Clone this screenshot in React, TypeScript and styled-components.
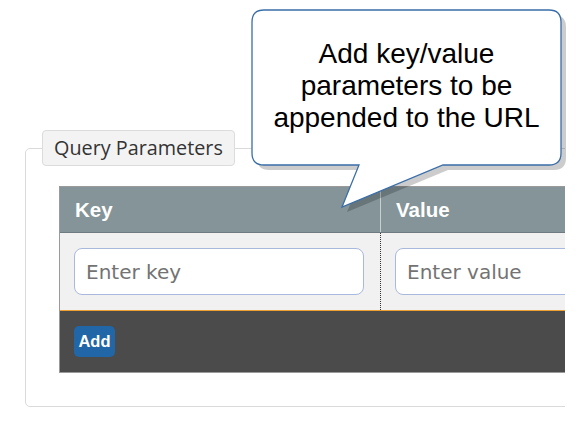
import styled, { createGlobalStyle } from "styled-components";

const GlobalStyle = createGlobalStyle`
  html, body {
    margin: 0;
    padding: 0;
    background: #ffffff;
  }
  * {
    box-sizing: border-box;
  }
`;

const Page = styled.div`
  position: relative;
  width: 577px;
  height: 430px;
  overflow: hidden;
  background: #ffffff;
`;

const Frame = styled.div`
  width: 565px;
  padding: 130px 0 0 25px;
  overflow: hidden;
`;

const ParamsFieldset = styled.fieldset`
  width: 620px;
  margin: 0;
  padding: 20px 0 33px 16px;
  border: 1px solid #dadada;
  border-radius: 5px;
`;

const ParamsLegend = styled.legend`
  padding: 0 11px;
  height: 36px;
  line-height: 33px;
  font-family: "Open Sans", "Liberation Sans", sans-serif;
  font-size: 19.8px;
  color: #333333;
  background: #f3f3f3;
  border: 1px solid #dcdcdc;
  border-radius: 4px;
`;

const Grid = styled.div`
  margin-left: 17px;
  width: 560px;
  border: 1px solid #9a9a9a;
  border-right: none;
`;

const Row = styled.div<{ $kind: "head" | "body" }>`
  display: grid;
  grid-template-columns: 320px 1fr;
  background: ${(p) => (p.$kind === "head" ? "#849498" : "#f1f1f1")};
  border-bottom: 1px solid ${(p) => (p.$kind === "head" ? "#6f7b7e" : "#f0a030")};
`;

const HeadCell = styled.div<{ $divider?: boolean }>`
  height: 45px;
  padding-left: 15px;
  display: flex;
  align-items: center;
  font-family: "Liberation Sans", Arial, sans-serif;
  font-weight: 700;
  font-size: 20.5px;
  color: #ffffff;
  border-left: ${(p) => (p.$divider ? "1px solid #c8cfd1" : "none")};
`;

const BodyCell = styled.div<{ $divider?: boolean }>`
  height: 77px;
  padding: 15px 16px 0 14px;
  border-left: ${(p) => (p.$divider ? "1px dotted #333333" : "none")};
`;

const TextField = styled.input`
  width: 100%;
  height: 47px;
  padding: 0 11px;
  border: 1px solid #a9b8dd;
  border-radius: 8px;
  background: #ffffff;
  font-family: "DejaVu Sans", Verdana, sans-serif;
  font-size: 20px;
  color: #333333;
  outline: none;
  &::placeholder {
    color: #737373;
  }
`;

const Footer = styled.div`
  height: 61px;
  padding: 15px 14px;
  background: #4b4b4b;
`;

const AddButton = styled.button`
  width: 41px;
  height: 31px;
  padding: 0;
  border: none;
  border-radius: 5px;
  background: #2166a6;
  color: #ffffff;
  font-family: "Liberation Sans", Arial, sans-serif;
  font-weight: 700;
  font-size: 16.5px;
`;

const Callout = styled.div`
  position: absolute;
  left: 250px;
  top: 8px;
  width: 322px;
  height: 210px;
`;

const CalloutShape = styled.svg`
  position: absolute;
  left: 0;
  top: 0;
`;

const CalloutText = styled.div`
  position: absolute;
  left: 2px;
  top: 30px;
  width: 309px;
  text-align: center;
  font-family: "Liberation Sans", Arial, sans-serif;
  font-size: 28px;
  line-height: 32px;
  color: #000000;
`;

const bubble =
  "M14,2 H299 Q311,2 311,14 V145 Q311,157 299,157 H193 L92,199 L109,157 H14 Q2,157 2,145 V14 Q2,2 14,2 Z";

export default function App() {
  return (
    <Page>
      <GlobalStyle />
      <Frame>
        <ParamsFieldset>
          <ParamsLegend>Query Parameters</ParamsLegend>
          <Grid>
            <Row $kind="head">
              <HeadCell>Key</HeadCell>
              <HeadCell $divider>Value</HeadCell>
            </Row>
            <Row $kind="body">
              <BodyCell>
                <TextField placeholder="Enter key" />
              </BodyCell>
              <BodyCell $divider>
                <TextField placeholder="Enter value" />
              </BodyCell>
            </Row>
            <Footer>
              <AddButton>Add</AddButton>
            </Footer>
          </Grid>
        </ParamsFieldset>
      </Frame>
      <Callout>
        <CalloutShape width="322" height="210" viewBox="0 0 322 210">
          <path d={bubble} transform="translate(5 5)" fill="#000000" opacity="0.2" />
          <path d={bubble} fill="#ffffff" stroke="#3a6ea8" strokeWidth="1.3" />
        </CalloutShape>
        <CalloutText>
          Add key/value
          <br />
          parameters to be
          <br />
          appended to the URL
        </CalloutText>
      </Callout>
    </Page>
  );
}
